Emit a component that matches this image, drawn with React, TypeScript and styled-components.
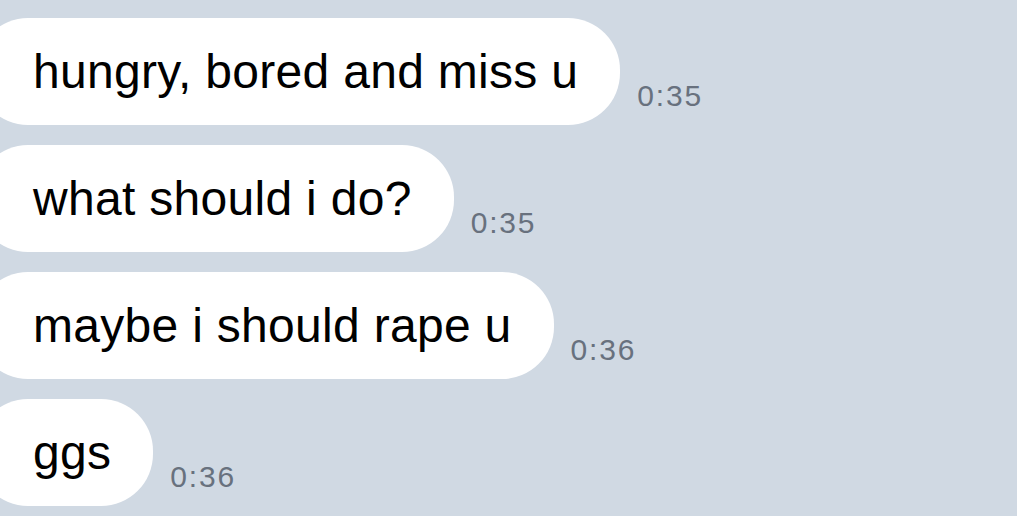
import styled, { createGlobalStyle } from "styled-components";

const GlobalStyle = createGlobalStyle`
  html, body {
    margin: 0;
    padding: 0;
    background: #d0d9e3;
    overflow: hidden;
  }
`;

const Chat = styled.div`
  display: flex;
  flex-direction: column;
  gap: 20px;
  padding-top: 18px;
  height: 516px;
  box-sizing: border-box;
  background: #d0d9e3;
  font-family: "Liberation Sans", Arial, sans-serif;
`;

const Row = styled.div`
  display: flex;
  align-items: flex-end;
  gap: 17px;
  margin-left: -24px;
`;

const Bubble = styled.div`
  display: flex;
  align-items: center;
  height: 107px;
  box-sizing: border-box;
  padding: 0 42px 0 57px;
  background: #ffffff;
  border-radius: 52px;
  color: #000;
  font-size: 48px;
  letter-spacing: 0.3px;
  white-space: nowrap;
`;

const Time = styled.span`
  margin-bottom: 12px;
  color: #68717e;
  font-size: 30px;
  letter-spacing: 1.8px;
`;

const messages = [
  { text: "hungry, bored and miss u", time: "0:35" },
  { text: "what should i do?", time: "0:35" },
  { text: "maybe i should rape u", time: "0:36" },
  { text: "ggs", time: "0:36" },
];

export default function App() {
  return (
    <>
      <GlobalStyle />
      <Chat>
        {messages.map((m, i) => (
          <Row key={i}>
            <Bubble>{m.text}</Bubble>
            <Time>{m.time}</Time>
          </Row>
        ))}
      </Chat>
    </>
  );
}
